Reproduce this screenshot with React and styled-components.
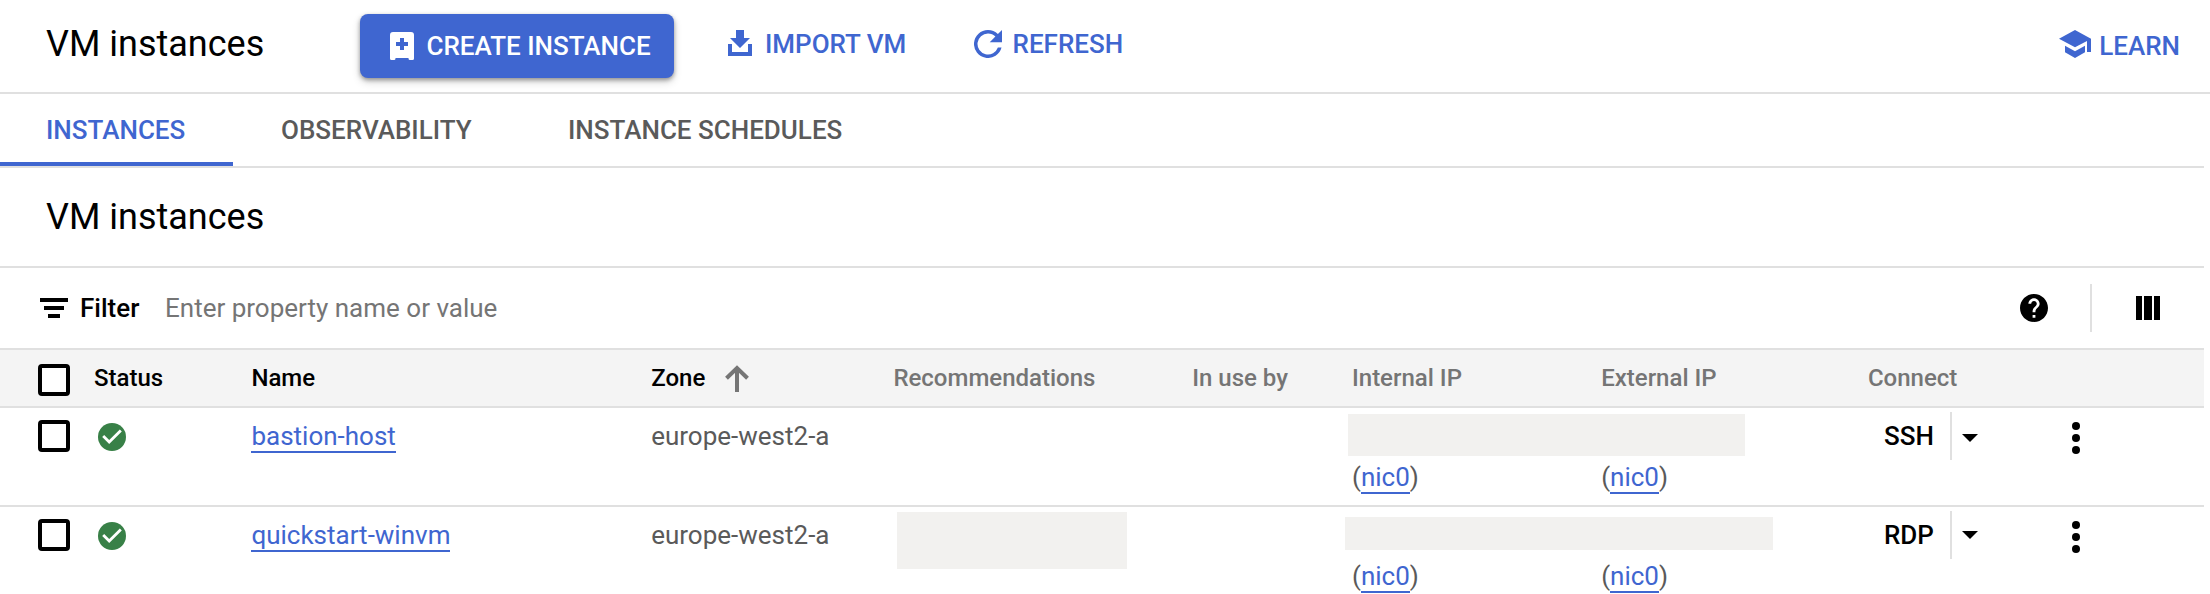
import React from "react";
import styled, { createGlobalStyle, css } from "styled-components";

const blue = "#3f66d0";
const line = "#e0e0e0";

const GlobalStyle = createGlobalStyle`
  * { box-sizing: border-box; }
  body { margin: 0; background: #fff; font-family: Roboto, "Liberation Sans", sans-serif; color: #000; }
  button { font: inherit; border: 0; background: none; padding: 0; margin: 0; text-align: left; }
  svg { display: block; flex: none; }
`;

const Page = styled.div`
  width: 2210px;
  height: 594px;
  overflow: hidden;
  background: #fff;
`;

const Header = styled.header`
  display: flex;
  align-items: flex-start;
  height: 94px;
  padding: 14px 30px 0 46px;
  border-bottom: 2px solid ${line};
`;

const Title = styled.h1`
  margin: 0;
  width: ${(p) => p.$width || "auto"};
  font-size: 36px;
  font-weight: 400;
  line-height: 60px;
  white-space: nowrap;
`;

const PrimaryButton = styled.button`
  display: flex;
  align-items: center;
  gap: 12.5px;
  width: 314px;
  height: 64px;
  padding-left: 30px;
  border-radius: 8px;
  background: ${blue};
  color: #fff;
  font-size: 26px;
  font-weight: 500;
  white-space: nowrap;
  box-shadow: 0 2px 4px rgba(0, 0, 0, 0.35), 0 4px 8px rgba(0, 0, 0, 0.16);
`;

const TextButton = styled.button`
  display: flex;
  align-items: center;
  gap: ${(p) => p.$gap}px;
  height: ${(p) => p.$height || 60}px;
  margin-left: ${(p) => p.$left};
  color: ${blue};
  font-size: 26px;
  font-weight: 500;
  white-space: nowrap;
`;

const Panel = styled.main`
  width: 2204px;
`;

const Tabs = styled.nav`
  display: flex;
  height: 74px;
  border-bottom: 2px solid ${line};
`;

const Tab = styled.button`
  width: ${(p) => p.$width}px;
  padding-left: ${(p) => p.$pad}px;
  font-size: 26px;
  font-weight: 500;
  line-height: 72px;
  white-space: nowrap;
  color: ${(p) => (p.$active ? blue : "#5a5a5a")};
  ${(p) => p.$active && css`box-shadow: inset 0 -4px 0 ${blue};`}
`;

const SectionHeading = styled.div`
  display: flex;
  align-items: center;
  height: 100px;
  padding-left: 46px;
  border-bottom: 2px solid ${line};
`;

const FilterBar = styled.div`
  display: flex;
  align-items: center;
  height: 82px;
  padding: 0 44px 0 40px;
  border-bottom: 2px solid ${line};
  font-size: 26px;
`;

const FilterLabel = styled.span`
  width: 85px;
  margin-left: 12px;
  font-weight: 500;
`;

const Placeholder = styled.span`
  flex: 1;
  color: #757575;
`;

const Divider = styled.span`
  flex: none;
  width: 2px;
  height: 48px;
  margin: ${(p) => p.$margin || 0};
  background: ${line};
`;

const Row = styled.div`
  position: relative;
  display: grid;
  grid-template-columns: 38px 56px 157.4px 399.8px 242.2px 298.8px 159.8px 249.2px 266.8px 204px 132px;
  height: 99px;
  padding-top: 8px;
  border-bottom: 2px solid ${line};
  font-size: 26px;
  line-height: 40px;
  color: #5a5a5a;
`;

const HeadRow = styled(Row)`
  height: 58px;
  background: #f4f4f4;
  font-size: 24px;
  font-weight: 500;
`;

const HeadCell = styled.span`
  display: flex;
  align-items: center;
  gap: 20px;
  height: 40px;
  color: ${(p) => (p.$strong ? "#000" : "#757575")};
  white-space: nowrap;
`;

const SortArrow = styled.svg`
  margin-top: 1px;
`;

const Cell = styled.div`
  white-space: nowrap;
`;

const Check = styled.span`
  display: block;
  width: 32px;
  height: 32px;
  margin-top: ${(p) => p.$top}px;
  border: 4px solid #000;
  border-radius: 4px;
  background: #fff;
`;

const StatusIcon = styled.svg`
  margin: 7px 0 0 4px;
`;

const Link = styled.a`
  display: inline-block;
  height: 37px;
  border-bottom: 2px solid ${blue};
  color: ${blue};
  text-decoration: none;
`;

const Nic = styled.div`
  height: 40px;
  margin-top: 41px;
`;

const Connect = styled.div`
  display: flex;
  align-items: flex-start;
  padding-left: 16px;
  margin-top: -4px;
  color: #000;
  font-weight: 500;
`;

const Protocol = styled.span`
  width: 66px;
  margin-top: 4px;
`;

const Caret = styled.svg`
  margin: ${(p) => p.$top}px 0 0 10px;
`;

const Redaction = styled.span`
  position: absolute;
  left: ${(p) => p.$x}px;
  top: ${(p) => p.$y}px;
  width: ${(p) => p.$w}px;
  height: ${(p) => p.$h}px;
  background: #f2f1ef;
`;

function StatusOk() {
  return (
    <StatusIcon width="28" height="28" viewBox="2 2 20 20">
      <circle cx="12" cy="12" r="10" fill="#388047" />
      <path d="m10 17-5-5 1.410-1.410L10 14.170l7.590-7.590L19 8l-9 9z" fill="#fff" />
    </StatusIcon>
  );
}

function NicLink() {
  return <Nic>(<Link href="#">nic0</Link>)</Nic>;
}

const instances = [
  { name: "bastion-host", zone: "europe-west2-a", protocol: "SSH", caretTop: 22, masks: [[1348, 6, 397, 42]] },
  { name: "quickstart-winvm", zone: "europe-west2-a", protocol: "RDP", caretTop: 20, masks: [[897, 5, 230, 57], [1345, 10, 428, 33]] },
];

export default function App() {
  return (
    <>
      <GlobalStyle />
      <Page>
        <Header>
          <Title $width="314px">VM instances</Title>
          <PrimaryButton>
            <svg width="24" height="28" viewBox="0 0 24 28">
              <path fill="#fff" fillRule="evenodd" d="M3 0h18a3 3 0 0 1 3 3v23.500a1.500 1.500 0 0 1-1.500 1.500H20a1.500 1.500 0 0 1-1.500-1.500V26h-13v.5A1.500 1.500 0 0 1 4 28H1.500A1.500 1.500 0 0 1 0 26.500V3a3 3 0 0 1 3-3ZM10 6v4H6v4h4v4h4v-4h4v-4h-4V6Z" />
            </svg>
            CREATE INSTANCE
          </PrimaryButton>
          <TextButton $gap={13} $left="54px">
            <svg width="24" height="28" viewBox="0 0 24 28">
              <path fill={blue} d="M8 0h8v8h6L12 18 2 8h6ZM0 14h4v8h16v-8h4v12H0Z" />
            </svg>
            IMPORT VM
          </TextButton>
          <TextButton $gap={10.5} $left="67.7px">
            <svg width="28" height="28" viewBox="4 4 16 16">
              <path fill={blue} d="M17.650 6.350A7.958 7.958 0 0 0 12 4a8 8 0 1 0 7.730 10h-2.080A6 6 0 1 1 12 6c1.660 0 3.140.69 4.220 1.780L13 11h7V4l-2.350 2.350z" />
            </svg>
            REFRESH
          </TextButton>
          <TextButton $gap={8} $height={60} $left="auto">
            <svg width="32" height="28" viewBox="0 0 32 28">
              <path fill={blue} d="M16 0 0 8.800 16 17.300l12-6.400V22h4V8.800ZM6 15.700v6.600l10 5.700 10-5.700v-6.600L16 21.300Z" />
            </svg>
            <LearnLabel>LEARN</LearnLabel>
          </TextButton>
        </Header>
        <Panel>
          <Tabs>
            <Tab $active $width={233} $pad={46}>INSTANCES</Tab>
            <Tab $width={287} $pad={48}>OBSERVABILITY</Tab>
            <Tab $width={370} $pad={48}>INSTANCE SCHEDULES</Tab>
          </Tabs>
          <SectionHeading>
            <Title as="h2">VM instances</Title>
          </SectionHeading>
          <FilterBar>
            <svg width="28" height="20" viewBox="0 0 28 20">
              <path d="M0 0h28v4H0ZM4 8h20v4H4ZM8 16h12v4H8Z" />
            </svg>
            <FilterLabel>Filter</FilterLabel>
            <Placeholder>Enter property name or value</Placeholder>
            <svg width="28" height="28" viewBox="2 2 20 20">
              <path d="M12 2C6.480 2 2 6.480 2 12s4.480 10 10 10 10-4.480 10-10S17.520 2 12 2zm1 17h-2v-2h2v2zm2.070-7.750-.9.920C13.450 12.900 13 13.500 13 15h-2v-.5c0-1.100.45-2.100 1.170-2.830l1.240-1.260c.37-.36.59-.86.59-1.410 0-1.100-.9-2-2-2s-2 .9-2 2H8c0-2.210 1.790-4 4-4s4 1.790 4 4c0 .88-.36 1.680-.93 2.250z" />
            </svg>
            <Divider $margin="0 44px 0 42px" />
            <svg width="24" height="24" viewBox="0 0 24 24">
              <path d="M0 0h6v24H0ZM8 0h8v24H8ZM18 0h6v24h-6Z" />
            </svg>
          </FilterBar>
          <HeadRow>
            <span />
            <Check $top={6} />
            <HeadCell $strong>Status</HeadCell>
            <HeadCell $strong>Name</HeadCell>
            <HeadCell $strong>
              Zone
              <SortArrow width="24" height="27" viewBox="0 0 24 27">
                <path d="M12 27V3M1.500 13.300 12 3l10.500 10.300" fill="none" stroke="#757575" strokeWidth="4" />
              </SortArrow>
            </HeadCell>
            <HeadCell>Recommendations</HeadCell>
            <HeadCell>In use by</HeadCell>
            <HeadCell>Internal IP</HeadCell>
            <HeadCell>External IP</HeadCell>
            <HeadCell>Connect</HeadCell>
          </HeadRow>
          {instances.map((vm) => (
            <Row key={vm.name}>
              <span />
              <Check $top={4} />
              <StatusOk />
              <Cell><Link href="#">{vm.name}</Link></Cell>
              <Cell>{vm.zone}</Cell>
              <span />
              <span />
              <NicLink />
              <NicLink />
              <Connect>
                <Protocol>{vm.protocol}</Protocol>
                <Divider />
                <Caret $top={vm.caretTop} width="16" height="8" viewBox="0 0 16 8">
                  <path d="M0 0h16L8 8Z" />
                </Caret>
              </Connect>
              <svg width="8" height="44" viewBox="0 0 8 44">
                <circle cx="4" cy="10" r="4" />
                <circle cx="4" cy="22" r="4" />
                <circle cx="4" cy="34" r="4" />
              </svg>
              {vm.masks.map(([x, y, w, h]) => (
                <Redaction key={x} $x={x} $y={y} $w={w} $h={h} />
              ))}
            </Row>
          ))}
        </Panel>
      </Page>
    </>
  );
}

const LearnLabel = styled.span`
  padding-top: 4px;
`;
